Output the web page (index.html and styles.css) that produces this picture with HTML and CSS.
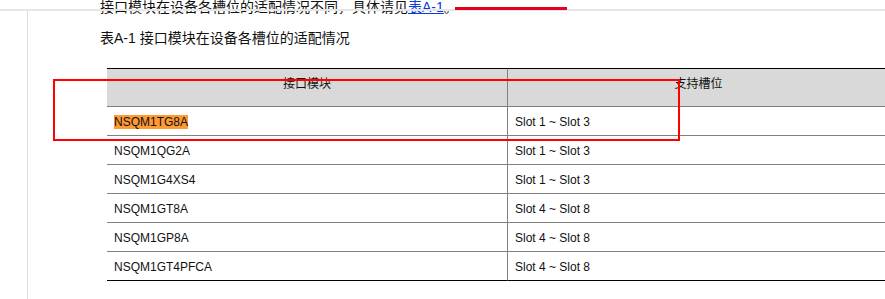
FILE: index.html
```html
<!DOCTYPE html>
<html lang="zh-CN">
<head>
  <meta charset="UTF-8">
  <title>接口模块适配情况</title>
  <link rel="stylesheet" href="styles.css">
</head>
<body>

  <div class="viewer">
    <div class="page">
      <p class="intro">接口模块在设备各槽位的适配情况不同，具体请见<a href="#tab-a1">表A-1</a>。</p>

      <p class="caption" id="tab-a1">表A-1 接口模块在设备各槽位的适配情况</p>

      <table class="slot-table">
        <thead>
          <tr>
            <th class="col-module">接口模块</th>
            <th>支持槽位</th>
          </tr>
        </thead>
        <tbody>
          <tr><td><span class="hit">NSQM1TG8A</span></td><td>Slot 1 ~ Slot 3</td></tr>
          <tr><td>NSQM1QG2A</td><td>Slot 1 ~ Slot 3</td></tr>
          <tr><td>NSQM1G4XS4</td><td>Slot 1 ~ Slot 3</td></tr>
          <tr><td>NSQM1GT8A</td><td>Slot 4 ~ Slot 8</td></tr>
          <tr><td>NSQM1GP8A</td><td>Slot 4 ~ Slot 8</td></tr>
          <tr><td>NSQM1GT4PFCA</td><td>Slot 4 ~ Slot 8</td></tr>
        </tbody>
      </table>
    </div>

    <!-- toolbar shadow and review marks drawn on top of the page -->
    <div class="top-shade"></div>
    <div class="mark-bar"></div>
    <div class="mark-box"></div>
  </div>

</body>
</html>
```

FILE: styles.css
```css
body {
  margin: 0;
  background-color: white;
  font-family: "Liberation Sans", "Noto Sans CJK SC", sans-serif;
  color: #111;
}

.viewer {
  position: relative;
  height: 299px;
  overflow: hidden;
}

.page {
  display: flow-root;
  margin-top: 11px;
  margin-left: 27px;
  padding-left: 72px;
  border-left: 1px solid #dddddd;
  min-height: 300px;
}

.intro {
  margin: -14px 0 0 0;
  font-size: 14px;
  line-height: 20px;
}

.intro a {
  color: #0b3cd6;
}

.caption {
  margin: 11px 0 0 0;
  font-size: 14px;
  line-height: 20px;
}

.slot-table {
  margin: 20px 0 0 7px;
  width: 782px;
  border-spacing: 0;
  font-size: 12px;
  line-height: 18px;
}

.slot-table th,
.slot-table td {
  box-sizing: border-box;
  border-bottom: 1px solid #808080;
}

.slot-table th:first-child,
.slot-table td:first-child {
  border-right: 1px solid #808080;
}

.slot-table th {
  font-weight: normal;
  text-align: center;
  background-color: #d9d9d9;
  border-top: 1px solid #000;
  padding: 6px 7px 13px;
}

.slot-table .col-module {
  width: 401px;
}

.slot-table td {
  text-align: left;
  padding: 6px 7px 4px;
}

.slot-table tbody tr:last-child td {
  border-bottom-color: #000;
}

.hit {
  background-color: #ff9933;
}

.top-shade {
  position: absolute;
  top: 9px;
  left: 0;
  right: 0;
  height: 2px;
  background-color: #e6e6e6;
}

.mark-bar {
  position: absolute;
  top: 7px;
  left: 455px;
  width: 112px;
  height: 3px;
  background-color: #e2001a;
}

.mark-box {
  position: absolute;
  top: 79px;
  left: 53px;
  width: 623px;
  height: 58px;
  border: 2px solid #ff0000;
}
```
